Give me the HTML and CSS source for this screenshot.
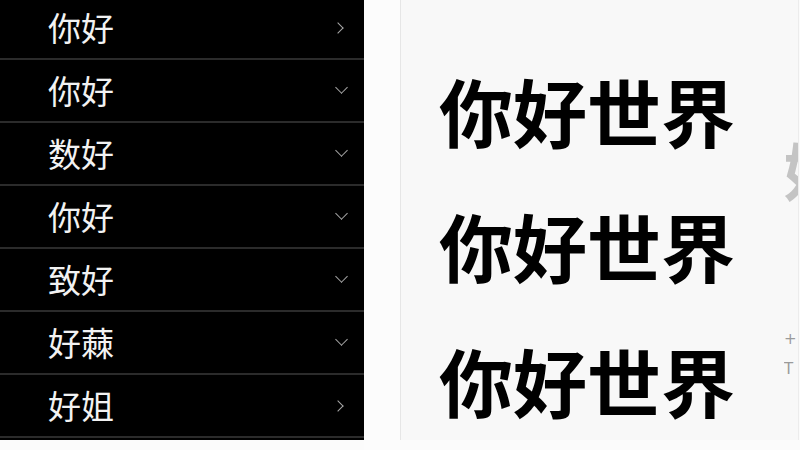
FILE: index.html
```html
<!DOCTYPE html>
<html lang="zh-CN">
<head>
    <meta charset="UTF-8">
    <meta name="viewport" content="width=device-width, initial-scale=1.0">
    <title>你好世界</title>
    <link rel="stylesheet" href="styles.css">
</head>
<body>
    <div class="screen">
        <ul class="menu">
            <li class="menu-item"><span>你好</span><span class="chev right"></span></li>
            <li class="menu-item"><span>你好</span><span class="chev down"></span></li>
            <li class="menu-item"><span>数好</span><span class="chev down"></span></li>
            <li class="menu-item"><span>你好</span><span class="chev down"></span></li>
            <li class="menu-item"><span>致好</span><span class="chev down"></span></li>
            <li class="menu-item"><span>好蕀</span><span class="chev down"></span></li>
            <li class="menu-item"><span>好姐</span><span class="chev right"></span></li>
        </ul>

        <div class="gutter"></div>

        <div class="preview">
            <div class="preview-text">
                <p>你好世界</p>
                <p>你好世界</p>
                <p>你好世界</p>
            </div>
            <div class="side">
                <span class="side-char">好</span>
                <span class="side-tool">+</span>
                <span class="side-tool">T</span>
            </div>
        </div>
    </div>
</body>
</html>
```

FILE: styles.css
```css
body {
    margin: 0;
    background-color: #fbfbfb;
    font-family: "Noto Sans CJK SC", "Noto Sans", sans-serif;
}

.screen {
    display: flex;
    width: 800px;
    height: 450px;
    overflow: hidden;
}

.menu {
    list-style: none;
    margin: -3px 0 0;
    padding: 0;
    width: 364px;
    height: 443px;
    background-color: #000;
    flex-shrink: 0;
}

.menu-item {
    display: flex;
    align-items: center;
    justify-content: space-between;
    box-sizing: border-box;
    height: 63px;
    padding: 0 18px 0 48px;
    border-bottom: 2px solid #2b2b2b;
    color: #f2f2f2;
    font-size: 33px;
    line-height: 1;
}

.chev {
    width: 8px;
    height: 8px;
    border-right: 1.5px solid #a8a8a8;
    border-bottom: 1.5px solid #a8a8a8;
}

.chev.down {
    transform: rotate(45deg);
    margin-top: -6px;
}

.chev.right {
    transform: rotate(-45deg);
    width: 7px;
    height: 7px;
    margin-right: 4px;
}

.gutter {
    width: 36px;
    background-color: #fcfcfc;
    flex-shrink: 0;
}

.preview {
    display: flex;
    width: 397px;
    height: 440px;
    border-left: 1px solid #e6e6e6;
    border-right: 1px solid #ececec;
    background-color: #f8f8f8;
}

.preview-text {
    flex: 1;
    padding: 42px 0 0 38px;
}

.preview-text p {
    margin: 0;
    font-size: 74px;
    font-weight: 700;
    line-height: 135px;
    color: #000;
}

.side {
    display: flex;
    flex-direction: column;
    width: 14px;
    overflow: hidden;
    padding-top: 138px;
}

.side-char {
    font-size: 62px;
    line-height: 1;
    font-weight: 700;
    color: #c4c4c4;
    white-space: nowrap;
}

.side-char + .side-tool {
    margin-top: 124px;
}

.side-tool {
    font-family: "DejaVu Sans", sans-serif;
    font-size: 15px;
    line-height: 30px;
    color: #9a9a9a;
}
```
